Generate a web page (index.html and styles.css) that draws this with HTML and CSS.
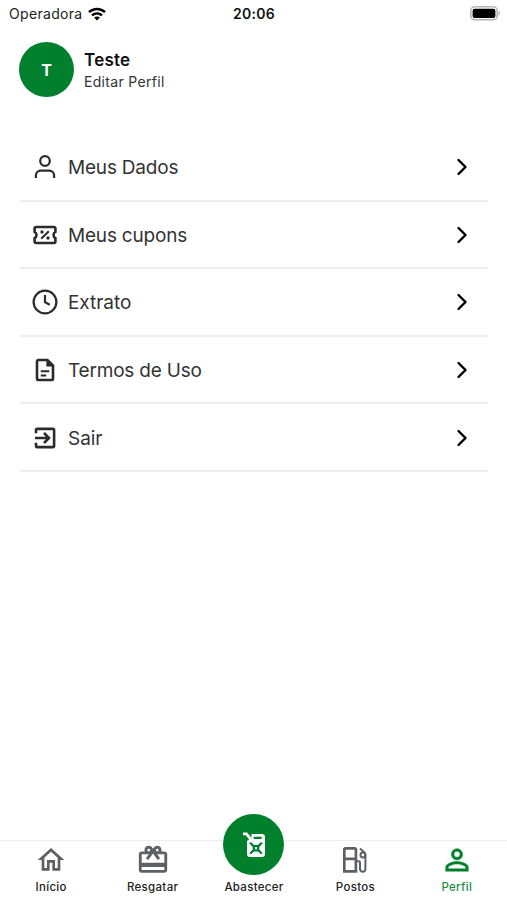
FILE: index.html
```html
<!DOCTYPE html>
<html lang="pt-BR">
<head>
<meta charset="utf-8">
<meta name="viewport" content="width=device-width, initial-scale=1">
<title>Perfil</title>
<link rel="stylesheet" href="styles.css">
</head>
<body>
<div class="app">
  <div class="status">
    <div class="carrier"><span>Operadora</span>
      <svg width="18" height="14" viewBox="0 0 18 14"><g fill="none" stroke="#000" stroke-width="2.5"><path d="M1 5.100C5.500.8 12.500.8 17 5.100"/><path d="M4 8.400c2.900-2.700 7.100-2.700 10 0"/></g><path d="M9 13.600l-2.900-3c1.700-1.500 4.100-1.500 5.800 0z"/></svg>
    </div>
    <time class="clock">20:06</time>
    <svg class="battery" width="31" height="15" viewBox="0 0 31 15"><rect x=".8" y=".8" width="26.400" height="13" rx="4" fill="#fff" stroke="#b5b5b5" stroke-width="1.600"/><rect x="2.600" y="2.700" width="22.800" height="9.300" rx="2"/><path d="M28.500 5c2 .6 2 4 0 4.700z" fill="#b5b5b5"/></svg>
  </div>

  <header class="profile">
    <div class="avatar">T</div>
    <div class="who"><strong class="name">Teste</strong><a class="edit">Editar Perfil</a></div>
  </header>

  <nav class="menu">
    <a class="row">
      <svg class="icon" viewBox="0 0 28 28"><circle cx="14" cy="8" r="4.800"/><path d="M4.900 25v-2.500a4.800 4.800 0 0 1 4.800-4.800h8.600a4.800 4.800 0 0 1 4.800 4.800V25"/></svg>
      <span class="label l1">Meus Dados</span><svg class="chev" viewBox="0 0 12 18"><path d="M2.500 2l7 7-7 7"/></svg>
    </a>
    <a class="row">
      <svg class="icon bold" viewBox="0 0 28 28"><path d="M5 6h18a1.400 1.400 0 0 1 1.400 1.400v3.500a3.500 3.500 0 0 0 0 6.200v3.500A1.400 1.400 0 0 1 23 22H5a1.400 1.400 0 0 1-1.400-1.400v-3.500a3.500 3.500 0 0 0 0-6.200V7.400A1.400 1.400 0 0 1 5 6z"/><path stroke-width="2" d="M10.200 17.800l7.600-7.600"/><g class="solid"><circle cx="11" cy="11" r="1.700"/><circle cx="17" cy="17" r="1.700"/></g></svg>
      <span class="label l2">Meus cupons</span><svg class="chev" viewBox="0 0 12 18"><path d="M2.500 2l7 7-7 7"/></svg>
    </a>
    <a class="row">
      <svg class="icon" viewBox="0 0 28 28"><circle cx="14" cy="14" r="11.400"/><path d="M14 7v7.200l4.800 2.500"/></svg>
      <span class="label l3">Extrato</span><svg class="chev" viewBox="0 0 12 18"><path d="M2.500 2l7 7-7 7"/></svg>
    </a>
    <a class="row">
      <svg class="icon bold" viewBox="0 0 28 28"><path d="M16.400 4H7.600A1.600 1.600 0 0 0 6 5.600v16.800A1.600 1.600 0 0 0 7.600 24h12.800a1.600 1.600 0 0 0 1.600-1.600V9.600z"/><path stroke-width="2" d="M9.800 15.300h8.400M9.800 19.500h5.400"/><path class="solid" d="M15.400 3.500v7h7.400z"/></svg>
      <span class="label l4">Termos de Uso</span><svg class="chev" viewBox="0 0 12 18"><path d="M2.500 2l7 7-7 7"/></svg>
    </a>
    <a class="row">
      <svg class="icon bold" viewBox="0 0 28 28"><path d="M5 9.200V6.200A1.300 1.300 0 0 1 6.300 4.900h15.500a1.300 1.300 0 0 1 1.300 1.300v15.600a1.300 1.300 0 0 1-1.300 1.300H6.300A1.300 1.300 0 0 1 5 21.800v-3M4 14h13.500M13 9l5 5-5 5"/></svg>
      <span class="label l5">Sair</span><svg class="chev" viewBox="0 0 12 18"><path d="M2.500 2l7 7-7 7"/></svg>
    </a>
  </nav>

  <nav class="tabs">
    <a class="tab"><svg width="32" height="34" viewBox="0 0 24 25.500"><path transform="translate(0 .8)" d="M12 5.690l5 4.500V18h-2v-6H9v6H7v-7.810l5-4.500M12 3L2 12h3v8h6v-6h2v6h6v-8h3L12 3z"/></svg><span>Início</span></a>
    <a class="tab"><svg width="34" height="34" viewBox="0 0 24 24"><path d="M20 6h-2.180c.11-.31.18-.65.18-1a2.996 2.996 0 0 0-5.500-1.650l-.5.67-.5-.68C10.960 2.540 10.050 2 9 2 7.340 2 6 3.340 6 5c0 .35.07.69.18 1H4c-1.110 0-1.990.89-1.990 2L2 19c0 1.110.89 2 2 2h16c1.110 0 2-.89 2-2V8c0-1.110-.89-2-2-2zm-5-2c.55 0 1 .45 1 1s-.45 1-1 1-1-.45-1-1 .45-1 1-1zM9 4c.55 0 1 .45 1 1s-.45 1-1 1-1-.45-1-1 .45-1 1-1zm11 15H4v-2h16v2zm0-5H4V8h5.080L7 10.830 8.620 12 11 8.760l1-1.360 1 1.360L15.380 12 17 10.830 14.920 8H20v6z"/></svg><span>Resgatar</span></a>
    <a class="tab main"><i class="fab"><svg width="24" height="28" viewBox="0 0 24 28"><path fill="#fff" d="M8.500 3H19a3 3 0 0 1 3 3v17a3 3 0 0 1-3 3H7a3 3 0 0 1-3-3V10l4.500-3.500z"/><path fill="none" stroke="#fff" stroke-width="2.800" d="M0 2.900h3.500l3.800 4.700"/><path fill="none" stroke="#007f2d" stroke-width="2.200" stroke-linecap="round" d="M11.500 6.800h6.300"/><g fill="none" stroke="#007f2d" stroke-width="2.200" stroke-linecap="round"><path d="M7.800 12.400l2.800 2.800M18.200 12.400l-2.800 2.800M7.800 22l2.800-2.800M18.200 22l-2.800-2.800"/><rect x="10.800" y="15" width="4.400" height="4.400"/></g></svg></i><span>Abastecer</span></a>
    <a class="tab"><svg width="34" height="34" viewBox="0 0 34 34"><g fill="none" stroke="#5f5f66" stroke-width="2.700"><path d="M6.300 28.300V6.600a1.200 1.200 0 0 1 1.200-1.200h9.200a1.200 1.200 0 0 1 1.200 1.200v21.700zM6 15.800h12"/><path stroke-width="2" d="M18.500 18.300h2.200a1.300 1.300 0 0 1 1.300 1.300v6.500a2.700 2.700 0 0 0 5.400 0V11.900c0-1-.3-1.700-1-2.400L22 5.600"/><circle cx="24.900" cy="12" r="2.400" stroke-width="2"/></g></svg><span>Postos</span></a>
    <a class="tab active"><svg width="34" height="34" viewBox="0 0 24 24"><path stroke="#007f2d" stroke-width=".3" d="M12 5.900a2.100 2.100 0 1 1 0 4.200 2.100 2.100 0 0 1 0-4.200m0 9c2.970 0 6.100 1.460 6.100 2.100v1.100H5.900V17c0-.64 3.130-2.100 6.100-2.100M12 4C9.790 4 8 5.790 8 8s1.790 4 4 4 4-1.790 4-4-1.790-4-4-4m0 9c-2.670 0-8 1.340-8 4v3h16v-3c0-2.660-5.330-4-8-4"/></svg><span>Perfil</span></a>
  </nav>
</div>
</body>
</html>
```
FILE: styles.css
```css
* { box-sizing: border-box; }
body { margin: 0; background: #fff; color: #111; font-family: Inter, "Liberation Sans", sans-serif; }
svg { display: block; flex: none; }
.app { height: 900px; display: flex; flex-direction: column; overflow: hidden; }

.status { height: 27px; display: grid; grid-template-columns: 1fr auto 1fr; align-items: center; padding: 0 6px 0 9px; }
.carrier { display: flex; align-items: center; gap: 5px; font-size: 14px; letter-spacing: .32px; color: #222; }
.clock { font-size: 14px; font-weight: 600; letter-spacing: .3px; margin-right: 2px; }
.battery { justify-self: end; }

.profile { height: 55px; margin: 15px 19px 0; display: flex; align-items: center; gap: 10px; }
.avatar { width: 55px; height: 55px; border-radius: 50%; background: #007f2d; color: #fff; font-size: 16px; font-weight: 700; display: grid; place-items: center; }
.who { display: flex; flex-direction: column; gap: 1px; padding-top: 3px; }
.name { font-size: 17px; line-height: 21px; font-weight: 600; letter-spacing: .25px; }
.edit { font-size: 14px; line-height: 20px; letter-spacing: .31px; color: #333; }

.menu { margin: 37px 19px 0 20px; }
.row { height: 67.6px; display: flex; align-items: center; padding: 1px 20px 0 11px; border-bottom: 2px solid #eee; }
.icon { width: 28px; height: 28px; fill: none; stroke: #2b2b2f; stroke-width: 2.2; }
.bold { stroke-width: 2.6; }
.icon .solid { fill: #2b2b2f; stroke: none; }
.label { flex: 1; margin-left: 9px; padding-top: 1px; font-size: 19px; letter-spacing: -.2px; color: #333; }
.l3, .l5 { letter-spacing: -.05px; }
.chev { width: 12px; height: 18px; fill: none; stroke: #000; stroke-width: 2.4; stroke-linecap: round; stroke-linejoin: round; }

.tabs { margin-top: auto; height: 60px; border-top: 1px solid #eee; display: grid; grid-template-columns: repeat(5, 1fr); }
.tab { display: flex; flex-direction: column; align-items: center; padding: 2px 0 0 1px; fill: #5f5f66; font-size: 11.5px; line-height: 16px; font-weight: 500; color: #222; letter-spacing: .3px; }
.tab span { margin-top: 2px; }
.active { color: #1a8f41; fill: #007f2d; }
.fab { width: 61px; height: 61px; flex: none; margin-top: -29px; border-radius: 50%; background: #007f2d; display: grid; place-items: center; padding-left: 2px; }
.main span { margin-top: 4px; }
```
